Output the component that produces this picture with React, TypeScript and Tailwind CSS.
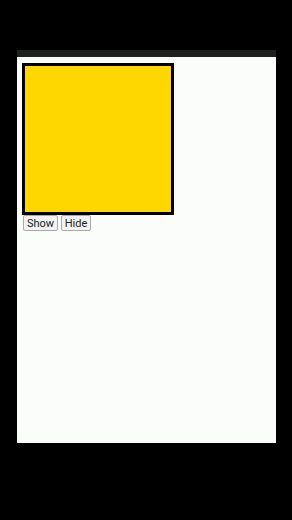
export default function App() {
  return (
    <div className="w-[292px] h-[520px] bg-black pt-[50px] pl-[17px] font-['Roboto',Arial,sans-serif]">
      <div className="w-[259px] h-[7px] bg-[#1e221f]" />
      <div className="w-[259px] h-[386px] bg-[#fbfdfb] pt-[6px] pl-[5px]">
        <div className="w-[152px] h-[152px] border-[3px] border-black bg-[#ffd700]" />
        <div className="flex gap-[3px] ml-[1px]">
          <button className="w-[35px] h-[16px] text-[11px] leading-none text-[#222] bg-[#f2f2f2] border border-[#a9a9a9] rounded-[2px]">
            Show
          </button>
          <button className="w-[30px] h-[16px] text-[11px] leading-none text-[#222] bg-[#f2f2f2] border border-[#a9a9a9] rounded-[2px]">
            Hide
          </button>
        </div>
      </div>
    </div>
  );
}
